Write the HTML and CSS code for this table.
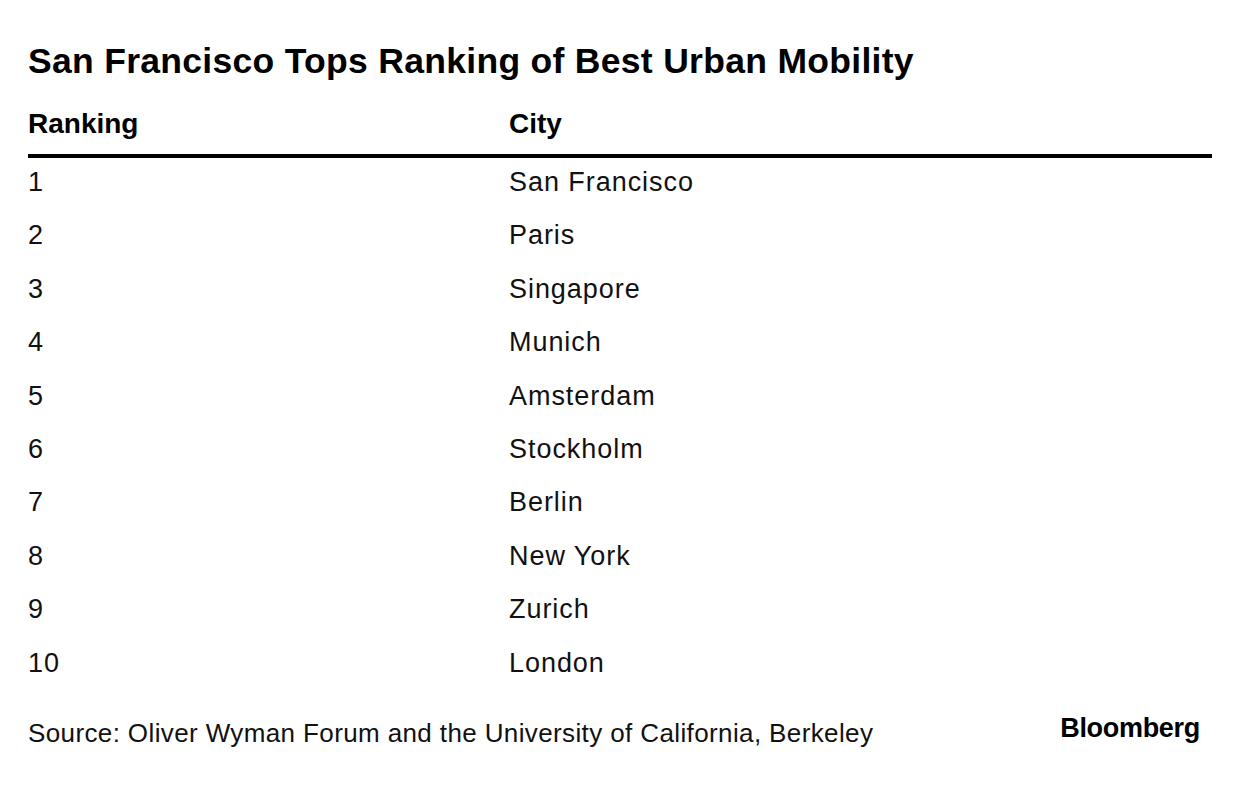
FILE: index.html
```html
<!DOCTYPE html>
<html lang="en">
<head>
<meta charset="utf-8">
<title>San Francisco Tops Ranking of Best Urban Mobility</title>
<link rel="stylesheet" href="styles.css">
</head>
<body>
<main class="chart">
  <h1 class="title">San Francisco Tops Ranking of Best Urban Mobility</h1>
  <div class="table">
    <div class="row head"><span>Ranking</span><span>City</span></div>
    <div class="row"><span>1</span><span>San Francisco</span></div>
    <div class="row"><span>2</span><span>Paris</span></div>
    <div class="row"><span>3</span><span>Singapore</span></div>
    <div class="row"><span>4</span><span>Munich</span></div>
    <div class="row"><span>5</span><span>Amsterdam</span></div>
    <div class="row"><span>6</span><span>Stockholm</span></div>
    <div class="row"><span>7</span><span>Berlin</span></div>
    <div class="row"><span>8</span><span>New York</span></div>
    <div class="row"><span>9</span><span>Zurich</span></div>
    <div class="row"><span>10</span><span>London</span></div>
  </div>
  <footer class="footer">
    <span class="source">Source: Oliver Wyman Forum and the University of California, Berkeley</span>
    <span class="logo">Bloomberg</span>
  </footer>
</main>
</body>
</html>
```
FILE: styles.css
```css
* { box-sizing: border-box; }
html, body { margin: 0; padding: 0; background: #fff; }
body {
  font-family: "Liberation Sans", Arial, Helvetica, sans-serif;
  color: #111;
}
.chart {
  padding: 41px 28px 0 28px;
  width: 1240px;
}
.title {
  margin: 0;
  font-size: 35.5px;
  line-height: 40px;
  font-weight: 700;
  color: #000;
  letter-spacing: 0.3px;
}
.table {
  margin-top: 28px;
}
.row {
  display: grid;
  grid-template-columns: 481px 1fr;
  font-size: 27px;
  line-height: 49.4px;
  padding-bottom: 4px;
  letter-spacing: 0.95px;
}
.row.head {
  font-weight: 700;
  font-size: 28px;
  line-height: 30px;
  padding-bottom: 15px;
  border-bottom: 4px solid #000;
  letter-spacing: 0;
  color: #000;
}
.footer {
  margin-top: 26px;
  display: flex;
  justify-content: space-between;
  align-items: flex-start;
  padding-right: 12px;
}
.source {
  font-size: 26px;
  line-height: 30px;
  letter-spacing: 0.38px;
}
.logo {
  font-size: 27px;
  line-height: 30px;
  font-weight: 700;
  margin-top: -5px;
  color: #000;
  letter-spacing: -0.3px;
}
```
